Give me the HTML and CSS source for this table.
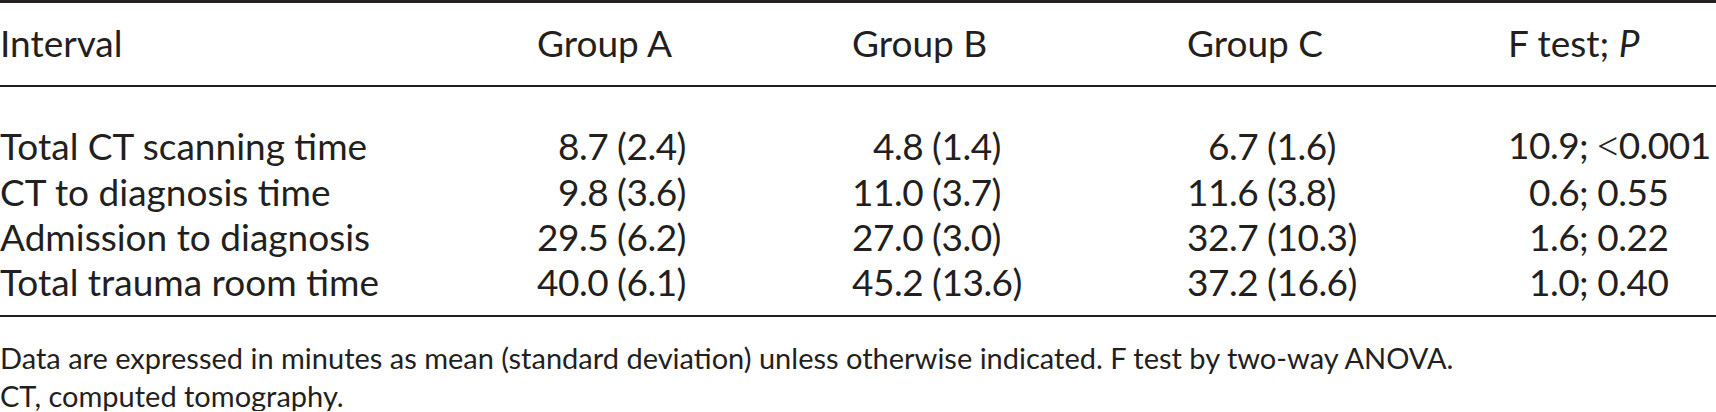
FILE: index.html
```html
<!DOCTYPE html>
<html lang="en">
<head>
<meta charset="utf-8">
<title>Table</title>
<link rel="stylesheet" href="styles.css">
</head>
<body>
<div class="wrap">
<table class="data">
  <colgroup>
    <col class="c1"><col class="c2"><col class="c3"><col class="c4"><col class="c5">
  </colgroup>
  <thead>
    <tr>
      <th>Interval</th>
      <th>Group A</th>
      <th>Group B</th>
      <th>Group C</th>
      <th>F test; <i>P</i></th>
    </tr>
  </thead>
  <tbody>
    <tr class="first">
      <td>Total CT scanning time</td>
      <td class="num">&#8199;8.7 (2.4)</td>
      <td class="num">&#8199;4.8 (1.4)</td>
      <td class="num">&#8199;6.7 (1.6)</td>
      <td class="num">10.9; <span class="lt">&lt;</span>0.001</td>
    </tr>
    <tr>
      <td>CT to diagnosis time</td>
      <td class="num">&#8199;9.8 (3.6)</td>
      <td class="num">11.0 (3.7)</td>
      <td class="num">11.6 (3.8)</td>
      <td class="num">&#8199;0.6; 0.55</td>
    </tr>
    <tr>
      <td>Admission to diagnosis</td>
      <td class="num">29.5 (6.2)</td>
      <td class="num">27.0 (3.0)</td>
      <td class="num">32.7 (10.3)</td>
      <td class="num">&#8199;1.6; 0.22</td>
    </tr>
    <tr class="last">
      <td>Total trauma room time</td>
      <td class="num">40.0 (6.1)</td>
      <td class="num">45.2 (13.6)</td>
      <td class="num">37.2 (16.6)</td>
      <td class="num">&#8199;1.0; 0.40</td>
    </tr>
  </tbody>
</table>
<div class="notes">
  <p>Data are expressed in minutes as mean (standard deviation) unless otherwise indicated. F test by two-way ANOVA.</p>
  <p>CT, computed tomography.</p>
</div>
</div>
</body>
</html>
```

FILE: styles.css
```css
html, body {
  margin: 0;
  padding: 0;
  background: #ffffff;
}
body {
  font-family: Lato, "Liberation Sans", sans-serif;
  color: #231f20;
  font-variant-numeric: tabular-nums;
}
.wrap {
  width: 1716px;
}
.data {
  width: 100%;
  border-collapse: collapse;
  table-layout: fixed;
  font-size: 37px;
}
.c1 { width: 537px; }
.c2 { width: 315px; }
.c3 { width: 335px; }
.c4 { width: 321px; }
.data th,
.data td {
  padding: 0;
  text-align: left;
  font-weight: normal;
  white-space: pre;
  vertical-align: middle;
  line-height: 45px;
}
.data .num {
  letter-spacing: -0.5px;
}
.data .lt {
  font-family: "Liberation Serif", serif;
  margin-right: 1px;
}
.data thead tr {
  border-top: 3px solid #231f20;
  border-bottom: 2px solid #231f20;
}
.data th {
  height: 78px;
  padding-bottom: 4px;
}
.data tbody td {
  height: 45px;
}
.data tbody tr.first td {
  padding-top: 35px;
}
.data tbody tr.last td {
  padding-bottom: 11px;
}
.data tbody {
  border-bottom: 2px solid #231f20;
}
.notes {
  padding-top: 26px;
  font-size: 29px;
  display: flex;
  flex-direction: column;
  gap: 8px;
}
.notes p {
  margin: 0;
  line-height: 30px;
}
```
